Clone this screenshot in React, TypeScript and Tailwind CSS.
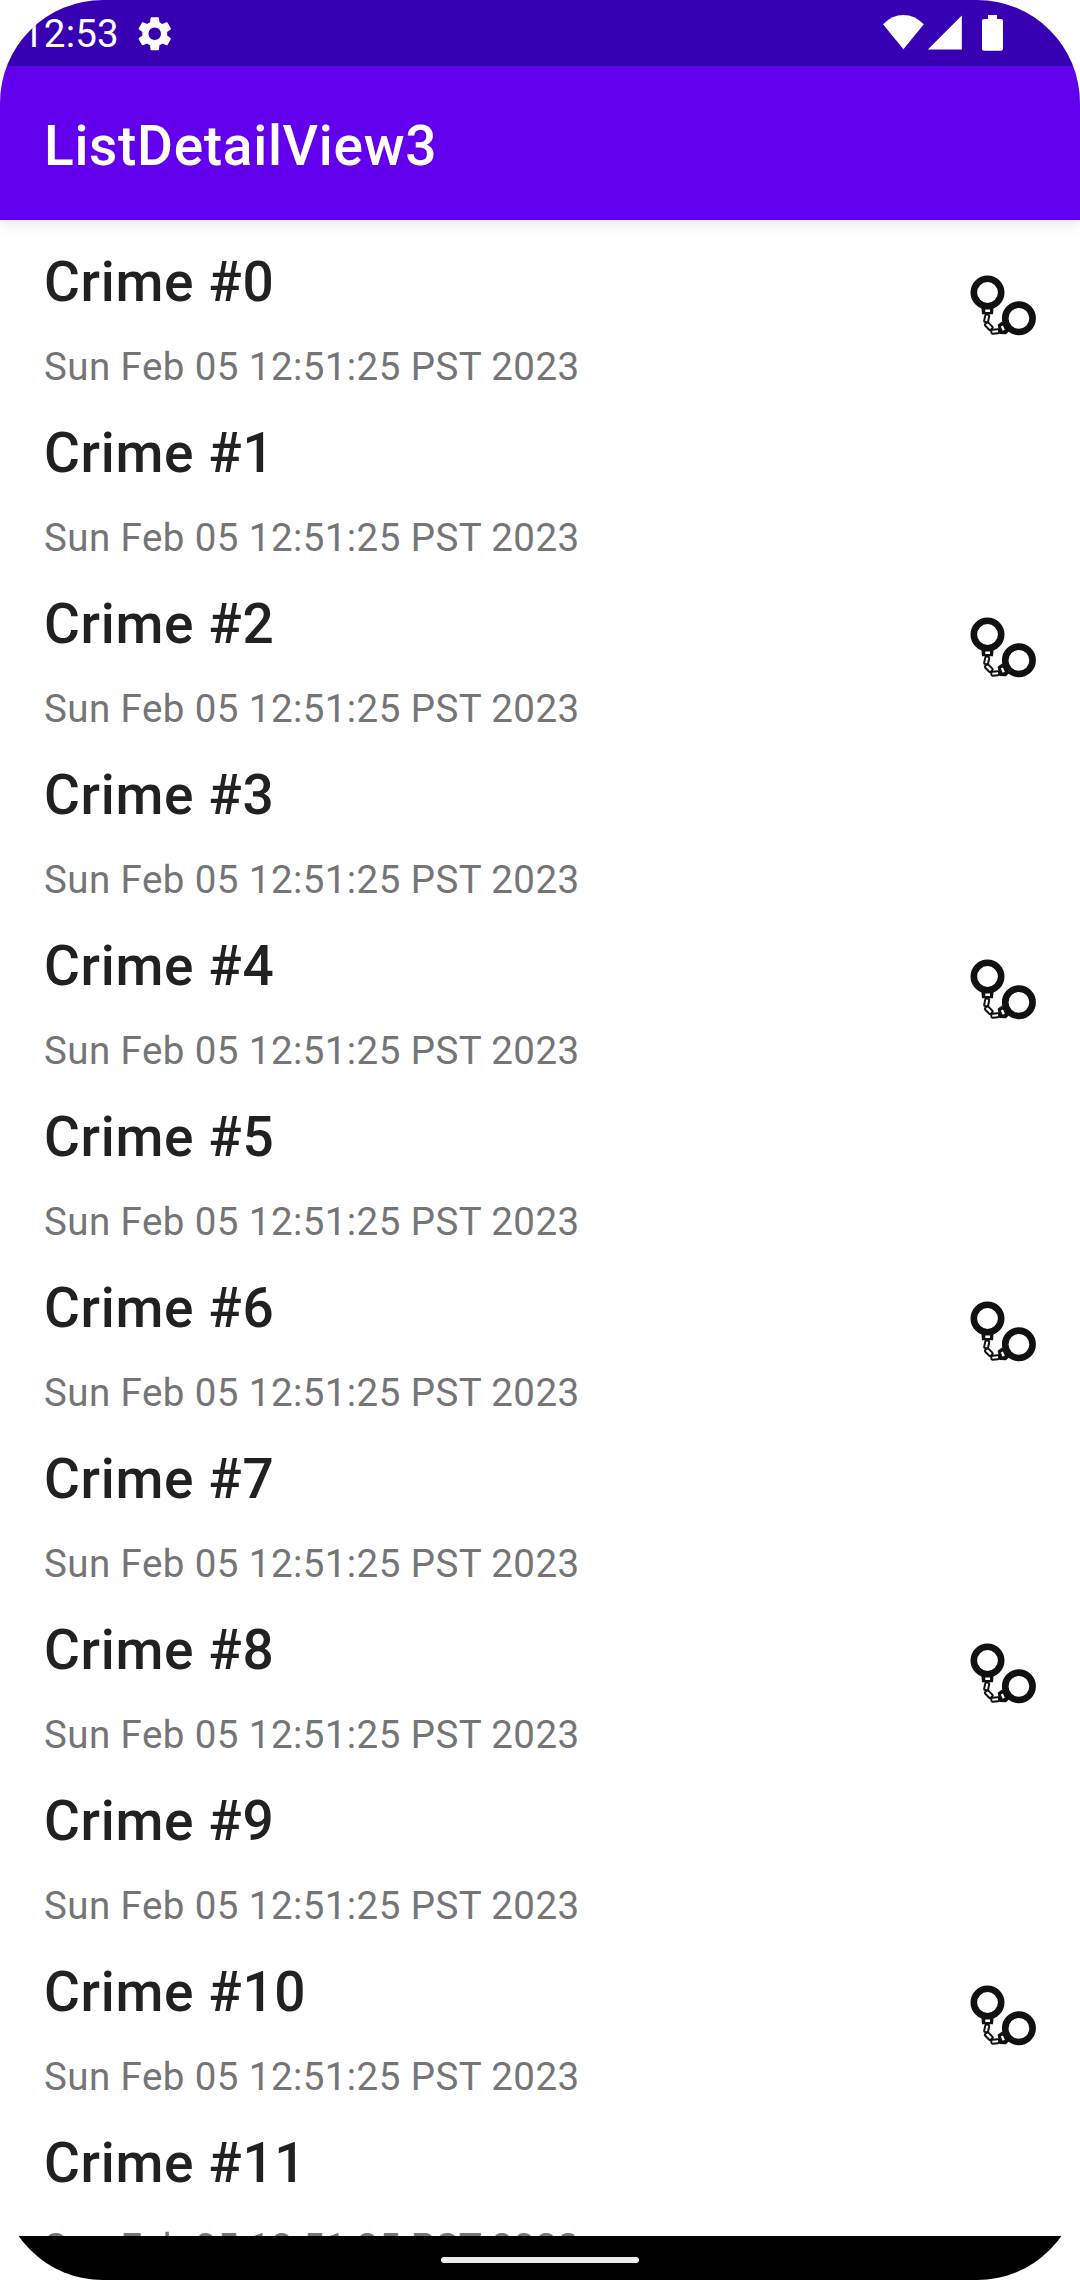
import { MdSettings } from "react-icons/md";

const crimes = Array.from({ length: 12 }, (_, i) => ({
  id: i,
  title: `Crime #${i}`,
  date: "Sun Feb 05 12:51:25 PST 2023",
  solved: i % 2 === 0,
}));

function Handcuffs() {
  return (
    <svg viewBox="0 0 66 62" className="h-[62px] w-[66px] shrink-0 overflow-visible" fill="none" stroke="#111">
      <circle cx="16.5" cy="16.5" r="13.700" strokeWidth="6.600" />
      <circle cx="47.9" cy="42.3" r="13.700" strokeWidth="6.600" />
      <path d="M10.300 30h12.400l-.700 8.200H11z M31 45.500l-4.400 3.300 2 9.200 6.400.300 3-3z" fill="#111" stroke="none" />
      <path d="M14.300 34.700h4.700M30.900 50l1.800 4.200" stroke="#fff" strokeWidth="2.400" />
      <rect x="13.700" y="38.500" width="4" height="7.800" rx="1.200" strokeWidth="2" transform="rotate(12 15.700 42.400)" />
      <rect x="13.800" y="48" width="8" height="4.400" rx="1.200" strokeWidth="2" transform="rotate(45 17.800 50.200)" />
      <rect x="20.300" y="53.500" width="7.800" height="4" rx="1.200" strokeWidth="2" transform="rotate(-3 24 55.500)" />
    </svg>
  );
}

function StatusBar() {
  return (
    <div className="flex h-[66px] shrink-0 items-start justify-between bg-[#3700b3] text-white">
      <div className="flex pl-[22px] pt-[11px]">
        <span className="text-[38.5px] leading-[45px] tracking-[0.2px]">12:53</span>
        <MdSettings className="ml-[15px] mt-[1.500px] size-[41.500px]" />
      </div>
      <svg viewBox="0 0 120 36" className="mr-[77px] mt-[15px] h-[36px] w-[120px]" fill="#fff">
        <path d="M0 9.300Q9 0 20.400 0T40.800 9.300L20.400 34.300Z" />
        <path d="M44.800 34.600 78.800 .600V34.600Z" />
        <path d="M105 0h9v4h4q2 0 2 2v27.700q0 2-2 2h-17q-2 0-2-2V6q0-2 2-2h4Z" />
      </svg>
    </div>
  );
}

export default function App() {
  return (
    <div className="h-[2280px] w-[1080px] bg-white font-['Roboto',sans-serif]">
      <div className="flex h-full flex-col overflow-hidden rounded-[103px] bg-white">
        <StatusBar />
        <header className="z-10 flex h-[154px] shrink-0 items-center bg-[#6200ee] pl-[44px] pt-[6px] shadow-[0_5px_14px_rgba(0,0,0,0.09)]">
          <h1 className="text-[55px] font-medium leading-[65px] tracking-[0.0125em] text-white">ListDetailView3</h1>
        </header>
        <ul className="min-h-0 flex-1 overflow-hidden">
          {crimes.map((c) => (
            <li key={c.id} className="flex h-[171px] items-start justify-between pl-[44px] pr-[43px]">
              <div className="pt-[30px]">
                <h2 className="text-[55px] font-medium leading-[65px] tracking-[0.0125em] text-[#212121]">{c.title}</h2>
                <p className="mt-[29px] text-[38.500px] leading-[45px] tracking-[0.011em] text-[#757575]">{c.date}</p>
              </div>
              {c.solved && <div className="pt-[56px]"><Handcuffs /></div>}
            </li>
          ))}
        </ul>
        <nav className="flex h-[44px] shrink-0 justify-center bg-black pt-[21px]">
          <div className="h-[6px] w-[198px] rounded-full bg-[#ebebeb]" />
        </nav>
      </div>
    </div>
  );
}
